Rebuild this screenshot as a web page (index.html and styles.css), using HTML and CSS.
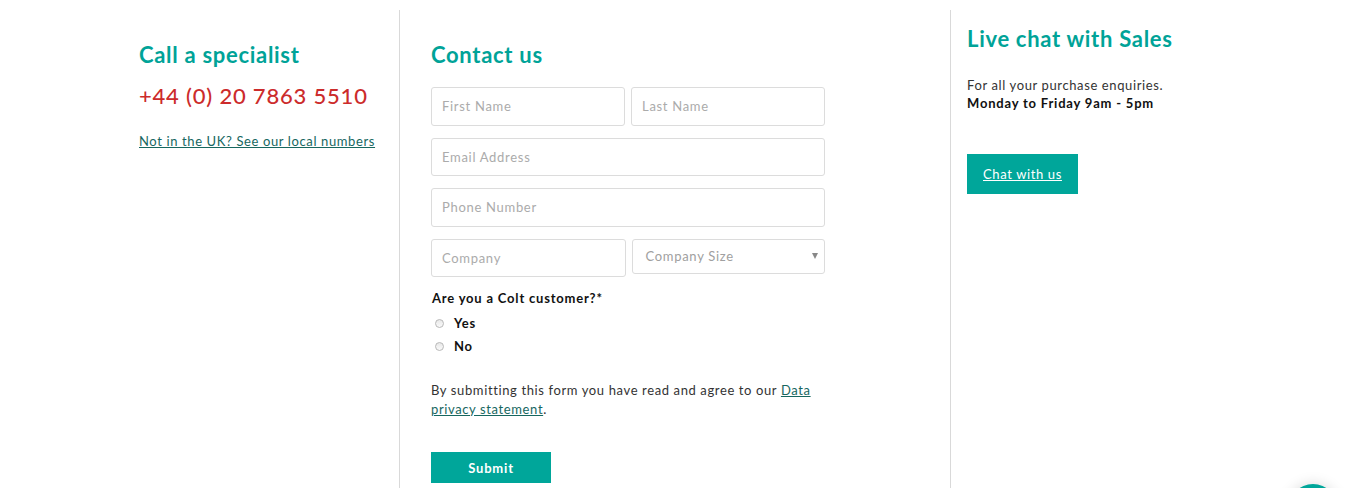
FILE: index.html
```html
<!DOCTYPE html>
<html lang="en">
<head>
<meta charset="utf-8">
<title>Contact</title>
<link rel="stylesheet" href="styles.css">
</head>
<body>
<div class="wrap">
  <section class="col col-left">
    <h2 class="heading">Call a specialist</h2>
    <p class="phone">+44 (0) 20 7863 5510</p>
    <a class="link local" href="#">Not in the UK? See our local numbers</a>
  </section>
  <section class="col col-mid">
    <h2 class="heading">Contact us</h2>
    <form class="form">
      <div class="row two">
        <input class="field" type="text" placeholder="First Name">
        <input class="field" type="text" placeholder="Last Name">
      </div>
      <div class="row">
        <input class="field" type="text" placeholder="Email Address">
      </div>
      <div class="row">
        <input class="field" type="text" placeholder="Phone Number">
      </div>
      <div class="row two">
        <input class="field" type="text" placeholder="Company">
        <div class="select">
          <span>Company Size</span>
          <span class="arrow"></span>
        </div>
      </div>
      <p class="question">Are you a Colt customer?*</p>
      <label class="radio"><span class="dot"></span>Yes</label>
      <label class="radio"><span class="dot"></span>No</label>
      <p class="terms">By submitting this form you have read and agree to our <a class="link" href="#">Data privacy statement</a>.</p>
      <button class="submit" type="button">Submit</button>
    </form>
  </section>
  <section class="col col-right">
    <h2 class="heading">Live chat with Sales</h2>
    <p class="info">For all your purchase enquiries.<br><strong>Monday to Friday 9am - 5pm</strong></p>
    <a class="chat-btn" href="#">Chat with us</a>
  </section>
</div>
<div class="fab"></div>
</body>
</html>
```

FILE: styles.css
```css
html, body {
  margin: 0;
  padding: 0;
  background: #fff;
  overflow: hidden;
}
body {
  font-family: Lato, "Noto Sans", "Liberation Sans", sans-serif;
  color: #222;
  font-size: 13px;
  letter-spacing: 0.62px;
}
.wrap {
  display: flex;
  padding-left: 139px;
  padding-top: 10px;
  height: 478px;
}
.col {
  box-sizing: border-box;
}
.col-left {
  width: 261px;
  border-right: 1px solid #d9d9d9;
  padding-top: 30px;
}
.col-mid {
  width: 551px;
  border-right: 1px solid #d9d9d9;
  padding-left: 31px;
  padding-top: 30px;
}
.col-right {
  padding-left: 16px;
  padding-top: 14px;
}
.heading {
  margin: 0;
  font-size: 22px;
  line-height: 30px;
  font-weight: 700;
  color: #00a398;
  letter-spacing: 0.7px;
}
.phone {
  margin: 12px 0 0;
  font-size: 22px;
  line-height: 28px;
  color: #cc2b2b;
  font-weight: 500;
  letter-spacing: 0.8px;
}
.link {
  color: #17675f;
  text-decoration: underline;
}
.local {
  display: inline-block;
  margin-top: 22px;
  font-size: 13px;
  line-height: 18px;
}
.form {
  width: 394px;
  margin-top: 17px;
}
.row {
  display: flex;
  gap: 6px;
  margin-bottom: 12px;
}
.row.two > * {
  flex: 1;
}
.field {
  box-sizing: border-box;
  width: 100%;
  height: 38.5px;
  border: 1px solid #dcdcdc;
  border-radius: 3px;
  padding: 0 10px;
  font-family: inherit;
  font-size: 13px;
  letter-spacing: 0.7px;
  color: #333;
  outline: none;
}
.field::placeholder {
  color: #ababab;
}
.select {
  box-sizing: border-box;
  height: 35px;
  border: 1px solid #dcdcdc;
  border-radius: 3px;
  padding: 0 6px 0 13px;
  display: flex;
  align-items: center;
  justify-content: space-between;
  color: #a0a0a0;
  font-size: 13px;
  letter-spacing: 0.7px;
}
.arrow {
  width: 0;
  height: 0;
  border-left: 3px solid transparent;
  border-right: 3px solid transparent;
  border-top: 6px solid #888;
}
.question {
  margin: 10px 0 5px 1px;
  font-weight: 700;
  color: #111;
  font-size: 13px;
  line-height: 18px;
  letter-spacing: 0.8px;
}
.radio {
  display: flex;
  align-items: center;
  font-weight: 700;
  color: #111;
  font-size: 13px;
  line-height: 23px;
  padding-left: 4px;
  letter-spacing: 0.8px;
}
.dot {
  box-sizing: border-box;
  width: 9px;
  height: 9px;
  border-radius: 50%;
  border: 1px solid #b8b8b8;
  background: linear-gradient(#e8e8e8, #fafafa);
  margin-right: 10px;
}
.terms {
  margin: 23px 0 0;
  font-size: 13px;
  line-height: 19px;
  color: #333;
}
.submit {
  margin-top: 33px;
  width: 120px;
  height: 31px;
  border: none;
  background: #00a69a;
  color: #fff;
  font-family: inherit;
  font-weight: 700;
  font-size: 13px;
  letter-spacing: 0.8px;
  padding: 0;
}
.info {
  margin: 22px 0 0;
  font-size: 13px;
  line-height: 18px;
  color: #333;
}
.info strong {
  color: #111;
  letter-spacing: 0.8px;
}
.chat-btn {
  display: inline-block;
  margin-top: 42px;
  padding: 0 16px;
  height: 40px;
  line-height: 40px;
  background: #00a69a;
  color: #fff;
  font-size: 13px;
  text-decoration: underline;
}
.fab {
  position: fixed;
  left: 1288px;
  top: 484px;
  width: 50px;
  height: 50px;
  border-radius: 50%;
  background: #00a69a;
  box-shadow: 0 0 14px rgba(0, 0, 0, 0.15);
}
```
